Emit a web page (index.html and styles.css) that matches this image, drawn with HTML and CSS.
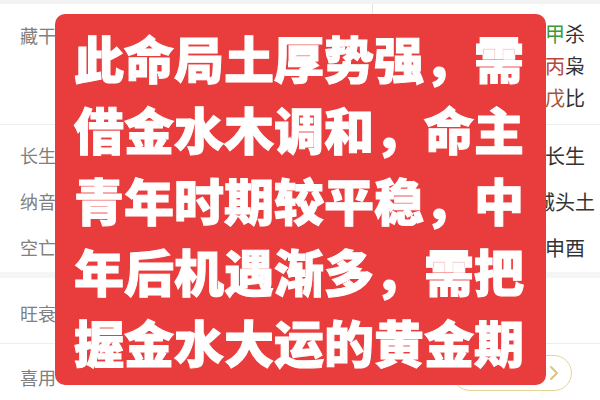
FILE: index.html
```html
<!DOCTYPE html>
<html lang="zh-CN">
<head>
    <meta charset="UTF-8">
    <meta name="viewport" content="width=device-width, initial-scale=1.0">
    <title>命盘详情</title>
    <link rel="stylesheet" href="styles.css">
</head>
<body>
    <div class="page">
        <div class="top-strip"></div>

        <div class="row row-canggan">
            <div class="label">藏干</div>
            <div class="col-split"></div>
            <div class="value value-stack">
                <div><span class="wood">甲</span>杀</div>
                <div><span class="fire">丙</span>枭</div>
                <div><span class="earth">戊</span>比</div>
            </div>
        </div>

        <div class="group">
            <div class="row row-line">
                <div class="label">长生</div>
                <div></div>
                <div class="value">长生</div>
            </div>
            <div class="row row-line">
                <div class="label">纳音</div>
                <div></div>
                <div class="value">城头土</div>
            </div>
            <div class="row row-line">
                <div class="label">空亡</div>
                <div></div>
                <div class="value">申酉</div>
            </div>
        </div>

        <div class="band"></div>

        <div class="row row-block">
            <div class="label">旺衰</div>
            <div></div>
            <div class="value"></div>
        </div>

        <div class="row-last">
            <div class="label">喜用</div>
            <div class="pill">
                <svg width="12" height="16" viewBox="0 0 12 16">
                    <polyline points="3,2 9,8 3,14" fill="none" stroke="#dcc47c" stroke-width="2" stroke-linecap="round" stroke-linejoin="round"/>
                </svg>
            </div>
        </div>

        <div class="notice">
            此命局土厚势强，需借金水木调和，命主青年时期较平稳，中年后机遇渐多，需把握金水大运的黄金期
        </div>
    </div>
</body>
</html>
```

FILE: styles.css
```css
body {
    margin: 0;
    background: #fff;
    font-family: "Noto Sans CJK SC", "Noto Sans", sans-serif;
}
.page {
    position: relative;
    width: 600px;
    height: 400px;
    overflow: hidden;
}
.top-strip {
    height: 4px;
    background: #f3f3f3;
}
.row {
    display: grid;
    grid-template-columns: 372px 1fr 70px;
}
.label {
    padding-left: 20px;
    font-size: 18px;
    color: #808080;
}
.value {
    text-align: center;
    font-size: 20px;
    color: #333;
}
.row-canggan {
    height: 120px;
    border-bottom: 1px solid #eee;
}
.row-canggan .label {
    padding-top: 19px;
    line-height: 24px;
}
.col-split {
    border-left: 1px solid #e4e4e4;
}
.value-stack {
    padding-top: 14px;
    line-height: 32px;
}
.wood { color: #3d9a3a; }
.fire { color: #b9473c; }
.earth { color: #a5563a; }

.group {
    padding: 7px 0 2px;
}
.row-line {
    height: 46px;
    align-items: center;
}
.band {
    height: 6px;
    background: #f5f5f5;
}
.row-block {
    height: 65px;
    align-items: center;
    border-bottom: 1px solid #eee;
}
.row-block .label {
    padding-top: 4px;
}
.row-last {
    display: flex;
    justify-content: space-between;
    align-items: center;
    height: 68px;
}
.row-last .label {
    padding-bottom: 2px;
}
.pill {
    align-self: flex-start;
    width: 120px;
    height: 36px;
    margin: 11px 28px 0 0;
    border: 1.5px solid #e6d496;
    border-radius: 19px;
    display: flex;
    justify-content: flex-end;
    align-items: center;
    padding-right: 11px;
    box-sizing: border-box;
}
.pill svg {
    display: block;
}

.notice {
    position: absolute;
    left: 55px;
    top: 14px;
    width: 491px;
    height: 371px;
    box-sizing: border-box;
    padding: 8px 20px 0 19px;
    background: #e83c3d;
    border-radius: 10px;
    color: #fff;
    font-size: 50px;
    font-weight: 900;
    line-height: 71px;
    -webkit-text-stroke: 1px #fff;
}
```
